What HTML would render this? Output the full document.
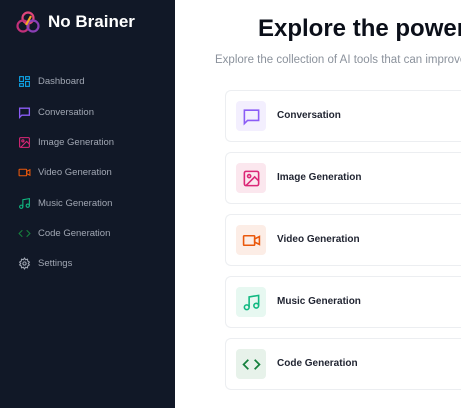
<!DOCTYPE html><html><head><style>
html,body{margin:0;width:461px;height:408px;overflow:hidden}
body{font-family:"Liberation Sans",sans-serif;background:#fff;position:relative}
#w{position:absolute;left:0;top:0;width:461px;height:408px;overflow:hidden}
.sb{position:absolute;left:0;top:0;width:175px;height:408px;background:#111827}
.logo{position:absolute;left:48px;top:12px;color:#fff;font-weight:bold;font-size:17px}
.it{position:absolute;left:18px;height:14px;display:flex;align-items:center;color:#a1a7b3;font-size:9.5px}
.it svg{width:13px;height:13px;margin-right:7px}
h1{position:absolute;left:258px;top:15px;margin:0;font-size:24px;white-space:nowrap;color:#0b0f19}
.sub{position:absolute;left:215px;top:54px;font-size:11.5px;color:#8b929c;white-space:nowrap}
.card{position:absolute;left:225px;width:236px;border-right:none;height:52px;border:1px solid #eceef1;border-right:none;border-radius:6px 0 0 6px;box-sizing:border-box}
.ib{position:absolute;left:10px;top:10px;width:30px;height:30px;border-radius:4px;display:flex;align-items:center;justify-content:center}
.ib svg{width:19px;height:19px}
.ct{position:absolute;left:51px;top:19px;font-size:10px;font-weight:bold;color:#1f2330}
</style></head><body><div id="w">
<div class="sb">
<svg style="position:absolute;left:15px;top:10px" width="26" height="24" viewBox="0 0 26 24" fill="none" stroke-width="2.2"><circle cx="13" cy="8" r="5.5" stroke="#e0457b"/><circle cx="8" cy="16" r="5.5" stroke="#c2307a"/><circle cx="18" cy="16" r="5.5" stroke="#8b3fb5"/><path d="M16 6 L11 15" stroke="#f5a623"/></svg>
<div class="logo">No Brainer</div>
<div class="it" style="top:74px"><svg viewBox="0 0 24 24" fill="none" stroke="#0ea5e9" stroke-width="2"><rect x="3" y="3" width="7" height="9"/><rect x="14" y="3" width="7" height="5"/><rect x="14" y="12" width="7" height="9"/><rect x="3" y="16" width="7" height="5"/></svg>Dashboard</div>
<div class="it" style="top:105px"><svg viewBox="0 0 24 24" fill="none" stroke="#8b5cf6" stroke-width="2.4"><path d="M3 4h18v13H7l-4 4z"/></svg>Conversation</div>
<div class="it" style="top:135px"><svg viewBox="0 0 24 24" fill="none" stroke="#db2777" stroke-width="2"><rect x="3" y="3" width="18" height="18" rx="2"/><circle cx="9" cy="9" r="2"/><path d="M21 15l-5-5L5 21"/></svg>Image Generation</div>
<div class="it" style="top:165px"><svg viewBox="0 0 24 24" fill="none" stroke="#ea580c" stroke-width="2"><rect x="2" y="6" width="14" height="12" rx="1"/><path d="M16 10l6-3v10l-6-3z"/></svg>Video Generation</div>
<div class="it" style="top:196px"><svg viewBox="0 0 24 24" fill="none" stroke="#10b981" stroke-width="2"><path d="M9 18V5l12-2v13"/><circle cx="6" cy="18" r="3"/><circle cx="18" cy="16" r="3"/></svg>Music Generation</div>
<div class="it" style="top:226px"><svg viewBox="0 0 24 24" fill="none" stroke="#15803d" stroke-width="2"><path d="M8 6l-6 6 6 6M16 6l6 6-6 6"/></svg>Code Generation</div>
<div class="it" style="top:256px"><svg viewBox="0 0 24 24" fill="none" stroke="#a1a7b3" stroke-width="2"><circle cx="12" cy="12" r="3"/><path d="M12 2l2 3 3.5-1 .5 3.5 3 2-2 2.5 2 2.5-3 2-.5 3.5-3.5-1-2 3-2-3-3.5 1-.5-3.5-3-2 2-2.5-2-2.5 3-2 .5-3.5 3.5 1z"/></svg>Settings</div>
</div>
<h1>Explore the power of AI</h1>
<div class="sub">Explore the collection of AI tools that can improve your life</div>
<div class="card" style="top:90px"><div class="ib" style="background:#f3effe"><svg viewBox="0 0 24 24" fill="none" stroke="#8b5cf6" stroke-width="2"><path d="M3 4h18v13H7l-4 4z"/></svg></div><div class="ct">Conversation</div></div>
<div class="card" style="top:152px"><div class="ib" style="background:#fbe7ee"><svg viewBox="0 0 24 24" fill="none" stroke="#db2777" stroke-width="2"><rect x="3" y="3" width="18" height="18" rx="2"/><circle cx="9" cy="9" r="2"/><path d="M21 15l-5-5L5 21"/></svg></div><div class="ct">Image Generation</div></div>
<div class="card" style="top:214px"><div class="ib" style="background:#fcede6"><svg viewBox="0 0 24 24" fill="none" stroke="#ea580c" stroke-width="2"><rect x="2" y="6" width="14" height="12" rx="1"/><path d="M16 10l6-3v10l-6-3z"/></svg></div><div class="ct">Video Generation</div></div>
<div class="card" style="top:276px"><div class="ib" style="background:#e7f8f1"><svg viewBox="0 0 24 24" fill="none" stroke="#10b981" stroke-width="2"><path d="M9 18V5l12-2v13"/><circle cx="6" cy="18" r="3"/><circle cx="18" cy="16" r="3"/></svg></div><div class="ct">Music Generation</div></div>
<div class="card" style="top:338px"><div class="ib" style="background:#e7f2ea"><svg viewBox="0 0 24 24" fill="none" stroke="#15803d" stroke-width="2.2"><path d="M8 6l-6 6 6 6M16 6l6 6-6 6"/></svg></div><div class="ct">Code Generation</div></div>
</div></body></html>
